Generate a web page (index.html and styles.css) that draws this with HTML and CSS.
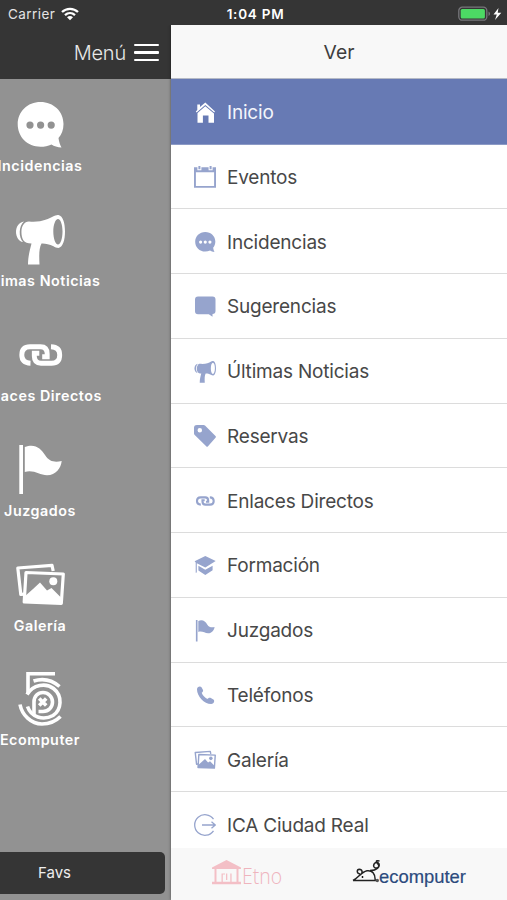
FILE: index.html
```html
<!DOCTYPE html>
<html lang="es">
<head>
<meta charset="utf-8">
<title>Menú</title>
<link rel="stylesheet" href="styles.css">
</head>
<body>
<svg class="defs" aria-hidden="true">
  <symbol id="chat" viewBox="0 0 50 50"><path fill="currentColor" fill-rule="evenodd" d="M25.5 2C38.500 2 48.500 11.500 48.500 24c0 6-2 10.500-5 14 .5 4 1.500 7 3 9.600-4-.3-7.500-1.500-10-3.200C33 46 29.500 46.700 25.500 46.700 12.500 46.700 2.700 37 2.700 24.300S12.500 2 25.500 2zM15 21.500a3.600 3.600 0 1 0 0 7.200 3.600 3.600 0 0 0 0-7.200zm10.600 0a3.600 3.600 0 1 0 0 7.200 3.600 3.600 0 0 0 0-7.200zm10.600 0a3.600 3.600 0 1 0 0 7.200 3.600 3.600 0 0 0 0-7.200z"/></symbol>
  <symbol id="mega" viewBox="0 0 50 50"><path fill="currentColor" fill-rule="evenodd" d="M14 6.500C27 7.500 33 4 39 1c2-1 3.500-1 4.500-1C48 1 50 8 50 16.500S48 32 43.500 33c-2 0-3.500-.8-5-1.700C34 29 30 28.300 26.500 28.500 24 33 24 40 24.500 49.500H13C13 41 15 35 16.500 28.500c-4 0-6.500-1-8-3C6 22 5.500 13 8.500 9.500c1.300-2 3-2.800 5.500-3zM43 4c-2.500 0-4.700 5.500-4.700 12.500S40.500 29.500 43 29.500s4.500-6 4.500-13S45.500 4 43 4z"/><path fill="currentColor" d="M9 6.500C4 7 1 12 1 17s3 9.500 7 10C3.500 22 3.500 11.500 9 6.500z"/></symbol>
  <symbol id="link" viewBox="0 0 50 50"><g fill="none" stroke="currentColor" stroke-width="4.900"><path d="M15.500 33.200C9 33 6.800 29.500 6.800 25c0-5.500 2.700-8.200 8.200-8.200h10.500c5 0 6.700 3 6.700 7.200v2.800h-5"/><path d="M36 16.800c6.500.2 8.700 3.700 8.700 8.200 0 5.500-2.700 8.200-8.200 8.200H26c-5 0-6.700-3-6.700-7.200v-2.800h5"/></g></symbol>
  <symbol id="flag" viewBox="0 0 50 50"><path fill="currentColor" d="M4.300 0H8v49H4.300zM9.800 2C20-2 26 3.500 30 10c4.500 7 10 7.500 16.700 6C46 23 41 30.300 32 30.300 24.500 30.300 19 24.500 9.800 27z"/></symbol>
  <symbol id="gallery" viewBox="0 0 50 50"><g fill="none" stroke="currentColor" stroke-width="3.200" stroke-linejoin="round"><path d="M38.200 11 37 5.300 2.800 8 5.800 34.500l3.500-.4"/><path d="M11 12.500 48.300 14 46.300 43.500 9.200 42z"/></g><path fill="currentColor" d="M9 43V37L18 29 25 22.500 32 30.500 36.500 28 46.500 38 46 43z"/><circle cx="38.300" cy="21.300" r="4" fill="currentColor"/></symbol>
  <symbol id="five" viewBox="0 0 50 56"><g fill="none" stroke="currentColor" stroke-width="3.600"><path d="M40 2.800H13V22.500"/><path d="M18.500 10C28 7 37 9 44.500 15.500"/><path d="M12 23.500C18 13.500 31 11.500 38.500 17.500 48 25 46.500 39 38 44.500 28 50 16 46 12.500 35.500"/><path d="M5 33.500C7 44 16 53 27 53c8 0 14-3 18.500-7.500"/><path d="M19 45V31c0-6 4-9.500 9-9.500s9.500 4 9.500 9.500-4 9.500-9.500 9.500h-4.500"/><path d="M24.200 27.500l7 7m0-7-7 7"/></g></symbol>
  <symbol id="home" viewBox="0 0 22 22"><path fill="currentColor" d="M3.300 2.500H6V5L11.300.6 21 9.400l-.8 1L11.300 3 2.600 10.400l-.8-1 1.500-1.300zM11.300 4.300 20 11.500v9.200h-5.500V13.500H8.900v7.200H3.500V11z"/></symbol>
  <symbol id="cal" viewBox="0 0 22 22"><path fill="currentColor" fill-rule="evenodd" d="M0 1.300H3.400V4.200h4V1.300h7.200v2.900h4V1.300H22V21.700H0zM1.900 6.300V19.900H20.100V6.300z"/><path fill="currentColor" d="M4.400 0h2V3.200h-2zM15.600 0h2v3.200h-2z"/></symbol>
  <symbol id="bubble" viewBox="0 0 22 22"><path fill="currentColor" d="M4 .5H18.500a3 3 0 0 1 3 3V15a3 3 0 0 1-3 3v2.800L14.800 18.300H4a3 3 0 0 1-3-3V3.500a3 3 0 0 1 3-3z"/></symbol>
  <symbol id="tag" viewBox="0 0 22 22"><path fill="currentColor" fill-rule="evenodd" d="M3 0H9.500a2 2 0 0 1 1.500.6L21.500 11a1.200 1.200 0 0 1 0 1.700L14 21.200a1.200 1.200 0 0 1-1.800 0L.7 10A2 2 0 0 1 0 8.500V3.200A3 3 0 0 1 3 0zm2.800 3a2.200 2.200 0 1 0 0 4.500 2.200 2.200 0 0 0 0-4.500z"/></symbol>
  <symbol id="hat" viewBox="0 0 22 22"><path fill="currentColor" d="M11.300 1 21.700 6 11.300 12.600 2.800 8.300V17.500L1.700 17.800V7.500L.6 6.300zM4.400 10.700l6.900 4 7.300-4v4.500l-7.300 4.700-6.900-4.500z"/></symbol>
  <symbol id="phone" viewBox="0 0 22 22"><path fill="currentColor" d="M3 4.500C2.800 2 6 .5 7.500 2.200L9 5c.4 1.200-.3 2-1.300 2.800 1 2.700 3 4.800 5.700 6.200.8-1 1.800-1.700 3-1.200l3 1.700c1.800 1.500.3 4.500-2.200 4.500C10 19 3 11 3 4.500z"/></symbol>
  <symbol id="exit" viewBox="0 0 22 22"><g fill="none" stroke="currentColor" stroke-width="1.300"><path d="M19.500 5.200a10.300 10.300 0 1 0 0 11.600M8 11H21.300M17.500 7.700 21.300 11l-3.800 3.300"/></g></symbol>
</svg>

<div class="screen">
  <header class="status">
    <div class="status-left">Carrier
      <svg width="18" height="14" viewBox="0 0 18 14"><g fill="none" stroke="#fff" stroke-width="2.300"><path d="M1 5C5.500.7 12.500.7 17 5M4 8.200c3-2.800 7-2.800 10 0"/></g><path fill="#fff" d="M6 10.300c2-1.700 4-1.700 6 0L9 13.200z"/></svg>
    </div>
    <div class="status-time">1:04 PM</div>
    <div class="status-right">
      <svg width="45" height="16" viewBox="0 0 45 16"><rect x=".8" y="1.200" width="28" height="13" rx="3.500" fill="none" stroke="#77777b" stroke-width="1.300"/><rect x="2.700" y="3" width="24.200" height="9.400" rx="1.500" fill="#4cd964"/><path fill="#77777b" d="M30.500 5.500c2 .8 2 3.700 0 4.500z"/><path fill="#fff" d="M40.500 2 35.500 8.600h3.300L37 14l6.300-7.300h-3.600z"/></svg>
    </div>
  </header>

  <div class="panes">
    <aside class="under">
      <div class="menu-bar">Menú <span class="burger"><i></i><i></i><i></i></span></div>
      <div class="tiles">
        <div class="tile"><svg><use href="#chat"/></svg><span>Incidencias</span></div>
        <div class="tile"><svg><use href="#mega"/></svg><span>Últimas Noticias</span></div>
        <div class="tile"><svg><use href="#link"/></svg><span>Enlaces Directos</span></div>
        <div class="tile"><svg><use href="#flag"/></svg><span>Juzgados</span></div>
        <div class="tile"><svg><use href="#gallery"/></svg><span>Galería</span></div>
        <div class="tile"><svg class="tall"><use href="#five"/></svg><span>Ecomputer</span></div>
      </div>
      <div class="favs">Favs</div>
    </aside>

    <main class="drawer">
      <h1>Ver</h1>
      <nav>
        <a class="active"><svg><use href="#home"/></svg><span>Inicio</span></a>
        <a><svg><use href="#cal"/></svg><span>Eventos</span></a>
        <a><svg><use href="#chat"/></svg><span>Incidencias</span></a>
        <a><svg><use href="#bubble"/></svg><span>Sugerencias</span></a>
        <a><svg><use href="#mega"/></svg><span>Últimas Noticias</span></a>
        <a><svg><use href="#tag"/></svg><span>Reservas</span></a>
        <a><svg><use href="#link"/></svg><span>Enlaces Directos</span></a>
        <a><svg><use href="#hat"/></svg><span>Formación</span></a>
        <a><svg><use href="#flag"/></svg><span>Juzgados</span></a>
        <a><svg><use href="#phone"/></svg><span>Teléfonos</span></a>
        <a><svg><use href="#gallery"/></svg><span>Galería</span></a>
        <a><svg><use href="#exit"/></svg><span>ICA Ciudad Real</span></a>
      </nav>
      <footer>
        <svg class="etno" viewBox="0 0 72 32"><path fill="#f3bfc6" d="M0 7.500 14.500 0 29 7.500V9H0zM2.500 9h2V22h-2zM24.500 9h2V22h-2zM9.500 13.500h1.300V22H9.500zM9.500 13.500H13V14.500H9.500zM14 13.500h1.300V20H14zM18.300 13.500h1.300V22h-1.300zM0 21.800H29V24.300H0z"/><text x="30" y="23.500" textLength="40" lengthAdjust="spacingAndGlyphs">Etno</text></svg>
        <svg class="ecomp" viewBox="0 0 116 30"><g fill="none" stroke="#222" stroke-width="1.500"><path d="M1 20.500C6 18 9 12 15 10.800c5-.8 8.500 3 8.200 9.700H1M8 14C4.500 13.500 4.500 9.500 7.300 9.200c3.200 0 3.700 3.800 1.200 5.600M18 10.500c7 0 10.500-4 8.700-7C25 .5 20.500 4 22 6.800c1.700 2.500 6 .8 4.500-2C24.500 2.500 22.500 0 27.500 1"/></g><circle cx="10.500" cy="17" r=".9"/><circle cx="25.300" cy="20.500" r="1.700" fill="#555"/><text x="27" y="22.500" textLength="87" lengthAdjust="spacingAndGlyphs">ecomputer</text></svg>
      </footer>
    </main>
  </div>
</div>
</body>
</html>
```
FILE: styles.css
```css
* { box-sizing: border-box; }
body { margin: 0; font-family: Inter, "Liberation Sans", sans-serif; }
.defs { display: none; }
svg { display: block; flex: none; }

.screen { width: 507px; height: 900px; overflow: hidden; display: flex; flex-direction: column; background: #929292; }

.status { height: 25px; flex: none; background: #353535; color: #fff; display: grid; grid-template-columns: 1fr auto 1fr; align-items: center; padding: 2px 4px 0 8px; font-size: 13.5px; }
.status-left { display: flex; align-items: center; gap: 6px; color: #e4e4e4; font-size: 13.5px; letter-spacing: 0.45px; }
.status-time { font-weight: 600; letter-spacing: 0.75px; }
.status-right { display: flex; justify-content: flex-end; }

.panes { flex: 1; min-height: 0; display: flex; }
.under { width: 171px; flex: none; display: flex; flex-direction: column; overflow: hidden; color: #fff; }
.menu-bar { height: 54px; flex: none; background: #353535; display: flex; align-items: center; justify-content: flex-end; gap: 8px; padding: 1px 12px 0 0; font-size: 20px; font-weight: 300; letter-spacing: -0.2px; color: #e8e8e8; }
.burger { width: 25px; display: grid; gap: 5px; }
.burger i { height: 2.5px; background: #fff; border-radius: 1px; }

.tiles { flex: 1; min-height: 0; width: 200px; margin-left: -60px; padding-top: 21px; }
.tile { height: 114.9px; display: flex; flex-direction: column; align-items: center; gap: 6px; font-size: 14.3px; font-weight: 600; line-height: 19px; letter-spacing: 0.54px; white-space: nowrap; }
.tile svg { width: 50px; height: 50px; }
.tile .tall { height: 56px; margin: -3px 0; }
.favs { height: 42px; flex: none; width: 170px; margin: 0 0 6px -5px; padding-right: 94px; text-align: right; line-height: 41px; border-radius: 5px; background: #353535; color: #eee; font-size: 15px; }

.drawer { flex: 1; min-width: 0; position: relative; display: flex; flex-direction: column; background: #fff; box-shadow: 0 0 3px rgba(0, 0, 0, 0.45); clip-path: inset(0 0 0 -4px); }
h1 { height: 54px; flex: none; margin: 0; background: #f8f8f8; border-bottom: 1px solid #b5bac6; text-align: center; font-size: 19.3px; line-height: 55px; font-weight: 400; color: #3e3e3e; }
nav { flex: 1; min-height: 0; overflow: hidden; }
nav a { height: 64.78px; padding: 2px 0 0 23px; display: flex; align-items: center; gap: 11px; border-bottom: 1px solid #dcdcdc; color: #96a4cd; }
nav a svg { width: 22px; height: 22px; }
nav a span { font-size: 19px; letter-spacing: -0.2px; color: #484848; white-space: nowrap; }
nav .active { height: 65.5px; padding-top: 2.5px; background: #677ab4; border-color: #8c9ac5; color: #fff; }
nav .active span { color: #f3f5fb; }

footer { height: 52px; flex: none; background: #f8f8f8; display: flex; padding: 12px 0 0 41px; gap: 68px; }
.etno { width: 72px; height: 32px; }
.etno text { font: 300 22px "Open Sans", sans-serif; fill: #efb4bd; }
.ecomp { width: 116px; height: 30px; }
.ecomp text { font: 19px "Liberation Sans", sans-serif; fill: #2b4a7d; stroke: #2b4a7d; stroke-width: 0.2px; }
```
